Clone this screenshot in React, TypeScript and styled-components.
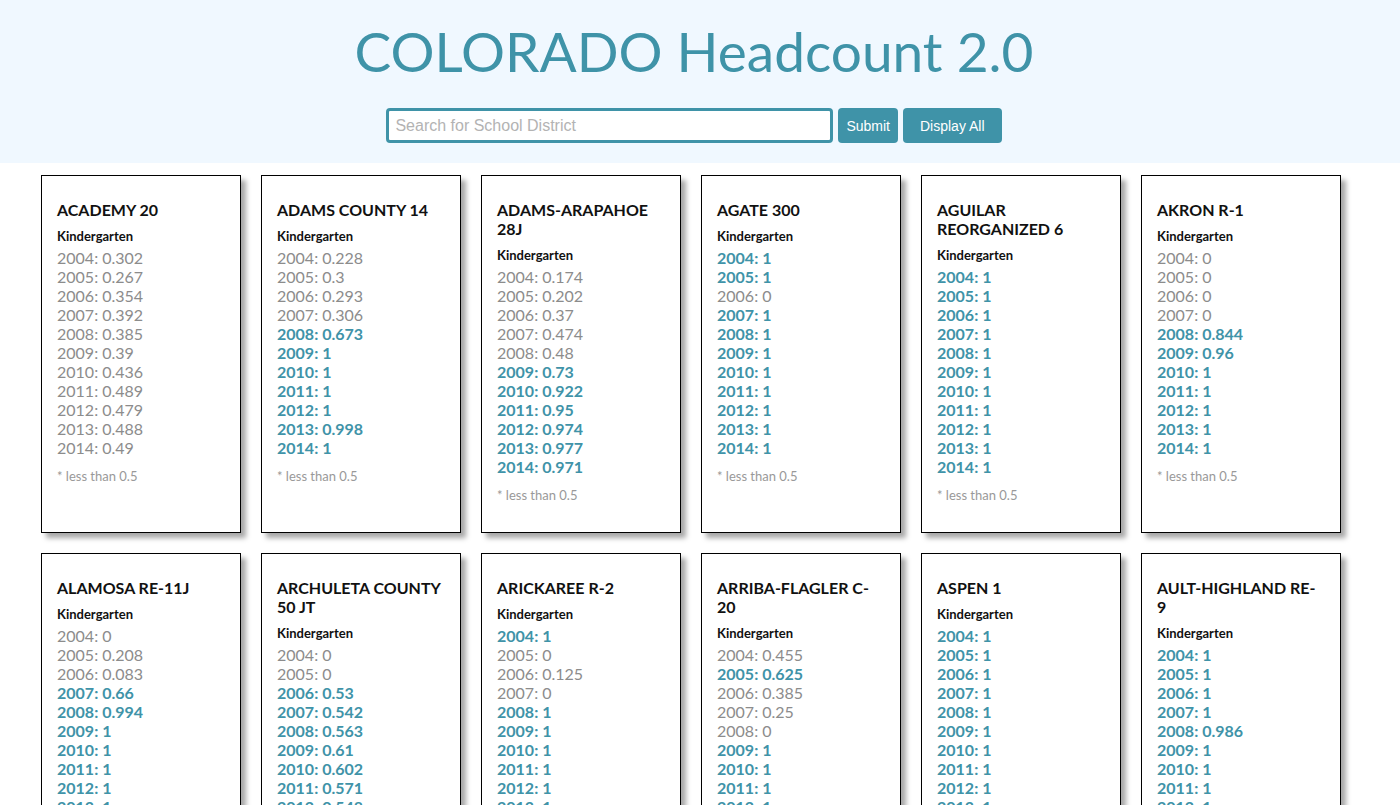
import styled, { createGlobalStyle } from "styled-components";

const GlobalStyle = createGlobalStyle`
  body {
    margin: 0;
    background: #ffffff;
    font-family: "Lato", "Noto Sans", sans-serif;
  }
`;

const Header = styled.header`
  background-color: #f0f8ff;
  height: 163px;
  display: flex;
  flex-direction: column;
  align-items: center;
  box-sizing: border-box;
  padding-top: 20px;
`;

const Title = styled.h1`
  margin: 0 12px 0 0;
  font-family: "Lato", sans-serif;
  font-weight: 400;
  font-size: 55px;
  line-height: 62px;
  color: #3f93a8;
`;

const SearchRow = styled.form`
  display: flex;
  gap: 5px;
  margin: 26px 12px 0 0;
`;

const SearchInput = styled.input`
  width: 447px;
  height: 35px;
  box-sizing: border-box;
  border: 3px solid #3f93a8;
  border-radius: 4px;
  padding: 0 6px;
  font-family: "Liberation Sans", Arial, sans-serif;
  font-size: 16px;
  color: #333;
  outline: none;
  &::placeholder {
    color: #b3b3b3;
  }
`;

const Button = styled.button<{ $wide?: boolean }>`
  height: 35px;
  padding: 0 ${(p) => (p.$wide ? "17px" : "8px")};
  border: none;
  border-radius: 4px;
  background-color: #3f93a8;
  color: #ffffff;
  font-family: "Liberation Sans", Arial, sans-serif;
  font-size: 14px;
`;

const Grid = styled.main`
  display: grid;
  grid-template-columns: repeat(6, 200px);
  column-gap: 20px;
  row-gap: 20px;
  padding: 12px 0 20px 41px;
`;

const Card = styled.section`
  box-sizing: border-box;
  width: 200px;
  height: 358px;
  border: 1px solid #000;
  background: #fff;
  box-shadow: 5px 5px 5px #a8a8a8;
  padding: 24px 16px 0 15px;
`;

const District = styled.h2`
  margin: 0;
  font-size: 16px;
  line-height: 19px;
  font-weight: 700;
  color: #111;
`;

const Grade = styled.h3`
  margin: 9px 0 4px;
  font-size: 13px;
  line-height: 16px;
  font-weight: 700;
  color: #111;
`;

const Stats = styled.ul`
  list-style: none;
  margin: 0;
  padding: 0;
`;

const Stat = styled.li<{ $high: boolean }>`
  font-size: 16px;
  line-height: 19px;
  font-weight: ${(p) => (p.$high ? 700 : 400)};
  color: ${(p) => (p.$high ? "#3f93a8" : "#8c8c8c")};
`;

const Note = styled.p`
  margin: 11px 0 0;
  font-size: 13px;
  color: #999;
`;

const years = [2004, 2005, 2006, 2007, 2008, 2009, 2010, 2011, 2012, 2013, 2014];

const districts: { name: string; values: number[] }[] = [
  { name: "ACADEMY 20", values: [0.302, 0.267, 0.354, 0.392, 0.385, 0.39, 0.436, 0.489, 0.479, 0.488, 0.49] },
  { name: "ADAMS COUNTY 14", values: [0.228, 0.3, 0.293, 0.306, 0.673, 1, 1, 1, 1, 0.998, 1] },
  { name: "ADAMS-ARAPAHOE 28J", values: [0.174, 0.202, 0.37, 0.474, 0.48, 0.73, 0.922, 0.95, 0.974, 0.977, 0.971] },
  { name: "AGATE 300", values: [1, 1, 0, 1, 1, 1, 1, 1, 1, 1, 1] },
  { name: "AGUILAR REORGANIZED 6", values: [1, 1, 1, 1, 1, 1, 1, 1, 1, 1, 1] },
  { name: "AKRON R-1", values: [0, 0, 0, 0, 0.844, 0.96, 1, 1, 1, 1, 1] },
  { name: "ALAMOSA RE-11J", values: [0, 0.208, 0.083, 0.66, 0.994, 1, 1, 1, 1, 1, 1] },
  { name: "ARCHULETA COUNTY 50 JT", values: [0, 0, 0.53, 0.542, 0.563, 0.61, 0.602, 0.571, 0.548, 0.6, 0.59] },
  { name: "ARICKAREE R-2", values: [1, 0, 0.125, 0, 1, 1, 1, 1, 1, 1, 1] },
  { name: "ARRIBA-FLAGLER C-20", values: [0.455, 0.625, 0.385, 0.25, 0, 1, 1, 1, 1, 1, 1] },
  { name: "ASPEN 1", values: [1, 1, 1, 1, 1, 1, 1, 1, 1, 1, 1] },
  { name: "AULT-HIGHLAND RE-9", values: [1, 1, 1, 1, 0.986, 1, 1, 1, 1, 1, 1] },
];

function App() {
  return (
    <>
      <GlobalStyle />
      <Header>
        <Title>COLORADO Headcount 2.0</Title>
        <SearchRow onSubmit={(e) => e.preventDefault()}>
          <SearchInput placeholder="Search for School District" />
          <Button type="submit">Submit</Button>
          <Button type="button" $wide>
            Display All
          </Button>
        </SearchRow>
      </Header>
      <Grid>
        {districts.map((d) => (
          <Card key={d.name}>
            <District>{d.name}</District>
            <Grade>Kindergarten</Grade>
            <Stats>
              {d.values.map((v, i) => (
                <Stat key={years[i]} $high={v >= 0.5}>
                  {years[i]}: {v}
                </Stat>
              ))}
            </Stats>
            <Note>* less than 0.5</Note>
          </Card>
        ))}
      </Grid>
    </>
  );
}

export default App;
